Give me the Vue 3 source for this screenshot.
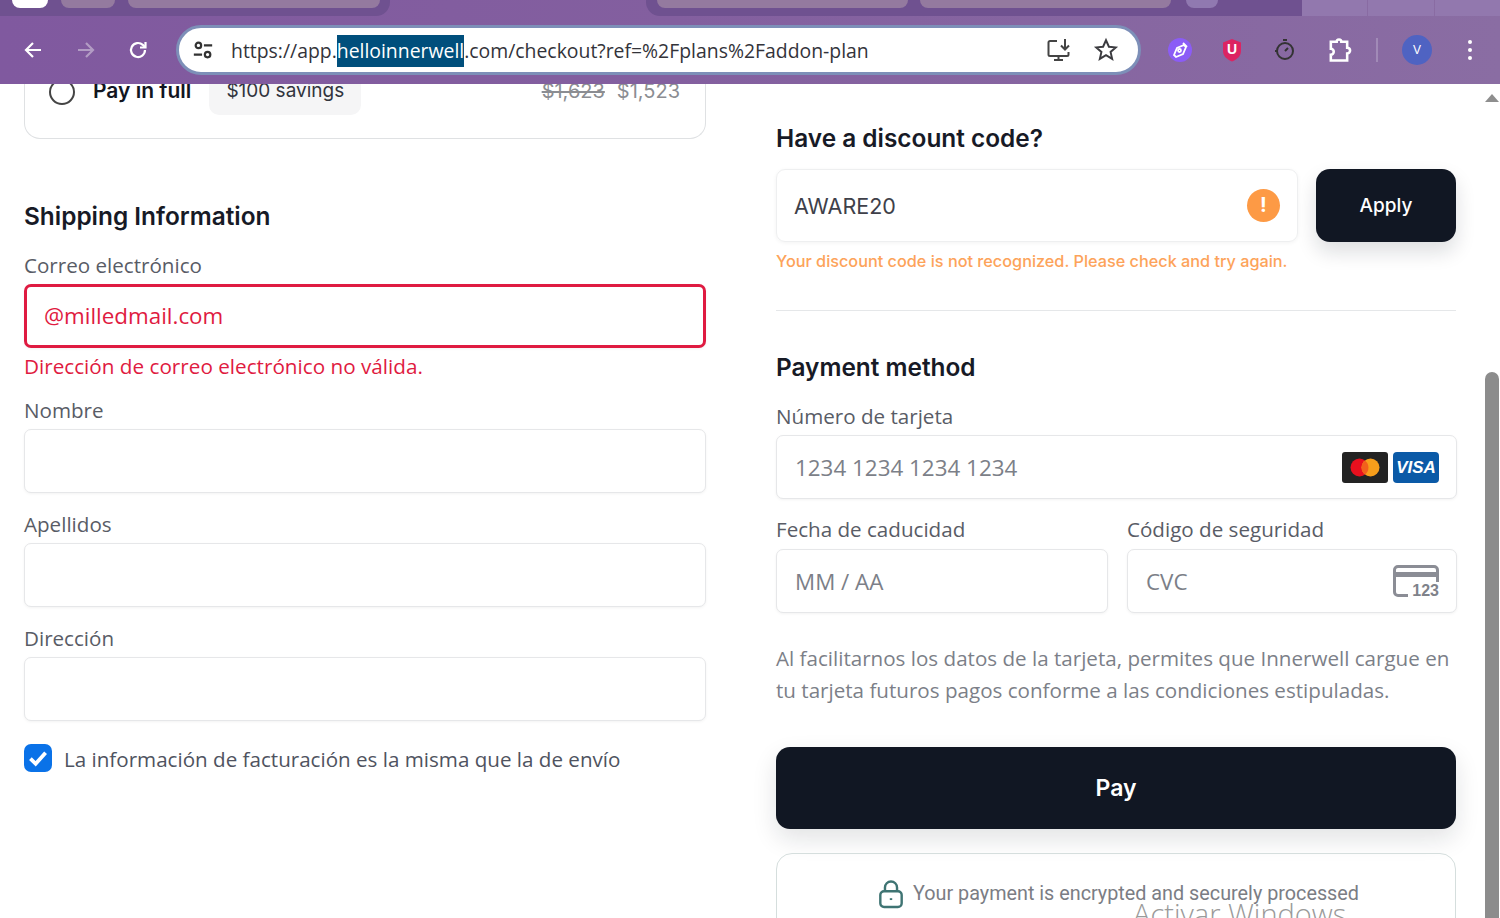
<script setup>
const fields = ["Nombre", "Apellidos", "Dirección"];
</script>

<template>
  <div class="screen">
    <header class="browser">
      <div class="tabstrip">
        <div class="strip-left">
          <span class="tab tab-white"></span>
          <span class="tab tab-small"></span>
          <span class="tab tab-wide"></span>
        </div>
        <div class="strip-right">
          <span class="tab tab-mid"></span>
          <span class="tab tab-mid"></span>
          <span class="tab tab-new"></span>
        </div>
        <div class="window-btns">
          <span></span>
          <span></span>
          <span></span>
        </div>
      </div>
      <div class="toolbar">
        <div class="nav">
          <svg viewBox="0 0 24 24" class="nav-icon">
            <path d="M20 12H5M12 5l-7 7 7 7" />
          </svg>
          <svg viewBox="0 0 24 24" class="nav-icon dim">
            <path d="M4 12h15M12 5l7 7-7 7" />
          </svg>
          <svg viewBox="0 0 24 24" class="nav-icon">
            <path d="M19 12a7 7 0 1 1-2.2-5.1L19 9" />
            <path d="M19.5 4v5.5H14" />
          </svg>
        </div>
        <div class="omnibox">
          <svg viewBox="0 0 24 24" class="tune">
            <circle cx="7" cy="7" r="3" />
            <path d="M13 7h9M2 17h9" />
            <circle cx="17" cy="17" r="3" />
          </svg>
          <div class="url">
            https://app.<span class="selected">helloinnerwell</span>.com/checkout?ref=%2Fplans%2Faddon-plan
          </div>
          <svg viewBox="0 0 28 24" class="install">
            <path d="M11 3H4a1.5 1.5 0 0 0-1.5 1.5v12A1.5 1.5 0 0 0 4 18h17a1.5 1.5 0 0 0 1.5-1.5V14" />
            <path d="M8 22h9M12.5 18v4" />
            <path d="M19 1v10M15 7.5l4 4 4-4" />
          </svg>
          <svg viewBox="0 0 24 24" class="star">
            <path d="M12 3l2.7 6 6.3.6-4.8 4.2 1.5 6.4L12 16.8l-5.7 3.4 1.5-6.4L3 9.6 9.3 9z" />
          </svg>
        </div>
        <div class="extensions">
          <span class="ext-purple">
            <svg viewBox="0 0 24 24">
              <path d="M6 17l3-7 7-3 2 2-3 7-7 3zM15 5l4 4" />
              <circle cx="11.5" cy="12.5" r="1.5" />
            </svg>
          </span>
          <svg viewBox="0 0 24 24" class="ext-shield">
            <path d="M12 1l9 3.5V13c0 5-4 8.5-9 10.5C7 21.5 3 18 3 13V4.5z" />
            <text x="12" y="16" text-anchor="middle">U</text>
          </svg>
          <svg viewBox="0 0 24 24" class="ext-timer">
            <circle cx="12" cy="13" r="8" />
            <path d="M10 2h4M12 13l3-3M2 13h3" />
          </svg>
          <svg viewBox="0 0 24 24" class="ext-puzzle">
            <path d="M5 5h5a2 2 0 0 1 4 0h5v5a2.5 2.5 0 0 1 0 5v6H5v-5a2.5 2.5 0 0 0 0-5z" />
          </svg>
          <span class="ext-sep"></span>
          <span class="avatar">V</span>
          <span class="dots">
            <i></i>
            <i></i>
            <i></i>
          </span>
        </div>
      </div>
    </header>

    <div class="viewport">
      <main class="page">
        <section class="col">
          <div class="plan-card">
            <div class="plan-row">
              <span class="radio"></span>
              <b class="plan-name">Pay in full</b>
              <span class="savings">$100 savings</span>
              <span class="prices"><s>$1,623</s><span>$1,523</span></span>
            </div>
          </div>

          <h2 class="shipping-title">Shipping Information</h2>

          <label class="label">Correo electrónico</label>
          <div class="input input-error">@milledmail.com</div>
          <p class="error-text">Dirección de correo electrónico no válida.</p>

          <template v-for="field in fields" :key="field">
            <label class="label field-label">{{ field }}</label>
            <div class="input"></div>
          </template>

          <div class="billing">
            <span class="checkbox">
              <svg viewBox="0 0 24 24">
                <path d="M5.5 12.5l4.5 4.5 8.5-9.5" />
              </svg>
            </span>
            <span>La información de facturación es la misma que la de envío</span>
          </div>
        </section>

        <section class="col">
          <h2 class="discount-title">Have a discount code?</h2>
          <div class="discount-row">
            <div class="discount-input">
              <span>AWARE20</span>
              <span class="warn">!</span>
            </div>
            <button class="apply">Apply</button>
          </div>
          <p class="discount-msg">Your discount code is not recognized. Please check and try again.</p>
          <hr class="divider" />

          <h2 class="payment-title">Payment method</h2>
          <label class="label card-label">Número de tarjeta</label>
          <div class="input card-input">
            <span class="placeholder">1234 1234 1234 1234</span>
            <span class="brands">
              <svg viewBox="0 0 46 31" class="brand">
                <rect width="46" height="31" rx="3" fill="#232323" />
                <circle cx="17.5" cy="15.5" r="9" fill="#e8101e" />
                <circle cx="28.5" cy="15.5" r="9" fill="#f79e1b" />
                <path d="M23 8.4a9 9 0 0 1 0 14.2 9 9 0 0 1 0-14.2z" fill="#f2601c" />
              </svg>
              <span class="visa">VISA</span>
            </span>
          </div>

          <div class="two-cols">
            <div>
              <label class="label card-label">Fecha de caducidad</label>
              <div class="input card-input">
                <span class="placeholder">MM / AA</span>
              </div>
            </div>
            <div>
              <label class="label card-label">Código de seguridad</label>
              <div class="input card-input">
                <span class="placeholder">CVC</span>
                <span class="cvc-icon">
                  <svg viewBox="0 0 46 32">
                    <path d="M15 30.5H5A3.5 3.5 0 0 1 1.5 27V5A3.5 3.5 0 0 1 5 1.5h36A3.5 3.5 0 0 1 44.5 5v12" />
                    <path d="M1.5 9.5h43" class="cvc-band" />
                  </svg>
                  <b>123</b>
                </span>
              </div>
            </div>
          </div>

          <p class="terms">
            Al facilitarnos los datos de la tarjeta, permites que Innerwell cargue en<br />
            tu tarjeta futuros pagos conforme a las condiciones estipuladas.
          </p>

          <button class="pay">Pay</button>

          <div class="secure">
            <svg viewBox="0 0 28 32" class="lock">
              <rect x="2.5" y="13" width="23" height="17" rx="4" />
              <path d="M7.5 13V9a6.5 6.5 0 0 1 13 0v4" />
              <path d="M14 20.5v2" />
            </svg>
            <span>Your payment is encrypted and securely processed</span>
          </div>
        </section>
      </main>

      <aside class="scrollbar">
        <span class="scroll-up"></span>
        <span class="scroll-thumb"></span>
      </aside>
      <div class="watermark">Activar Windows</div>
    </div>
  </div>
</template>

<style>
html,
body {
  margin: 0;
  background: #fff;
}
</style>

<style scoped>
.screen {
  width: 1500px;
  height: 918px;
  overflow: hidden;
  display: flex;
  flex-direction: column;
  font-family: "Open Sans", "Liberation Sans", sans-serif;
  color: #4f5360;
}

/* browser chrome */
.browser {
  height: 84px;
  flex: none;
  background: linear-gradient(90deg, #80599f 0%, #835f9f 45%, #8a6da3 100%);
}
.tabstrip {
  height: 16px;
  display: flex;
  justify-content: space-between;
  overflow: hidden;
}
.strip-left,
.strip-right {
  height: 16px;
  background: #6f5190;
  display: flex;
  align-items: flex-start;
  flex: none;
}
.strip-left {
  width: 390px;
  padding-left: 12px;
  box-sizing: border-box;
  border-radius: 0 0 14px 0;
}
.strip-right {
  width: 656px;
  margin-left: 256px;
  padding-left: 11px;
  box-sizing: border-box;
  border-radius: 0 0 0 14px;
}
.tab {
  height: 8px;
  border-radius: 0 0 10px 10px;
  background: #947a9f;
  flex: none;
}
.tab-white {
  width: 36px;
  background: #fff;
}
.tab-small {
  width: 54px;
  margin-left: 13px;
}
.tab-wide {
  width: 252px;
  margin-left: 13px;
}
.tab-mid {
  width: 251px;
  margin-right: 12px;
}
.tab-new {
  width: 32px;
  margin-left: 3px;
  border-radius: 0 0 16px 16px;
  background: #9079b0;
}
.window-btns {
  width: 198px;
  display: flex;
  gap: 1px;
  flex: none;
}
.window-btns span {
  flex: 1;
  background: #9278ae;
}
.toolbar {
  height: 68px;
  display: flex;
  align-items: center;
}
.nav {
  width: 176px;
  padding-left: 21px;
  box-sizing: border-box;
  display: flex;
  gap: 28.5px;
  flex: none;
}
.nav-icon {
  width: 24px;
  height: 24px;
  fill: none;
  stroke: #fff;
  stroke-width: 2.2;
}
.nav-icon.dim {
  stroke: #b29cc4;
}
.omnibox {
  width: 965px;
  height: 50px;
  box-sizing: border-box;
  border: 3px solid #7d8fb8;
  border-radius: 25px;
  background: #fff;
  display: flex;
  align-items: center;
  padding: 0 19px 0 13px;
  flex: none;
}
.tune {
  width: 22px;
  height: 22px;
  fill: none;
  stroke: #333;
  stroke-width: 2.4;
  flex: none;
}
.url {
  margin-left: 17px;
  padding-top: 1px;
  flex: 1;
  font-size: 19.4px;
  line-height: 32px;
  color: #33333a;
  white-space: nowrap;
}
.selected {
  display: inline-block;
  background: #004f7c;
  color: #fff;
}
.install {
  width: 28px;
  height: 24px;
  fill: none;
  stroke: #444;
  stroke-width: 2;
  flex: none;
}
.star {
  width: 26px;
  height: 26px;
  margin-left: 19px;
  fill: none;
  stroke: #3c3c40;
  stroke-width: 1.8;
  flex: none;
}
.extensions {
  display: flex;
  align-items: center;
  margin-left: 27px;
}
.ext-purple {
  width: 24px;
  height: 24px;
  border-radius: 50%;
  background: #8b5cf6;
  flex: none;
}
.ext-purple svg {
  width: 24px;
  height: 24px;
  display: block;
  fill: none;
  stroke: #fff;
  stroke-width: 1.8;
}
.ext-shield {
  width: 24px;
  height: 24px;
  margin-left: 28px;
  fill: #dc2462;
  flex: none;
}
.ext-shield text {
  fill: #fff;
  font: bold 14px "Liberation Sans", sans-serif;
}
.ext-timer {
  width: 24px;
  height: 24px;
  margin-left: 29px;
  fill: none;
  stroke: #333;
  stroke-width: 2;
  flex: none;
}
.ext-puzzle {
  width: 28px;
  height: 28px;
  margin-left: 28px;
  fill: none;
  stroke: #fff;
  stroke-width: 2.2;
  flex: none;
}
.ext-sep {
  width: 2px;
  height: 24px;
  margin-left: 23px;
  background: #a18ab7;
  flex: none;
}
.avatar {
  width: 30px;
  height: 30px;
  margin-left: 24px;
  border-radius: 50%;
  background: #4f63c2;
  color: #fff;
  font: 12px/30px "Liberation Sans", sans-serif;
  text-align: center;
  flex: none;
}
.dots {
  display: flex;
  flex-direction: column;
  gap: 4px;
  margin-left: 36px;
}
.dots i {
  width: 4px;
  height: 4px;
  border-radius: 50%;
  background: #fff;
}

/* page */
.viewport {
  flex: 1;
  display: flex;
  position: relative;
  overflow: hidden;
  min-height: 0;
}
.page {
  width: 1457px;
  padding-left: 24px;
  box-sizing: border-box;
  display: grid;
  grid-template-columns: 682px 681px;
  column-gap: 70px;
  align-items: start;
}
.col {
  min-width: 0;
}
.plan-card {
  height: 55px;
  box-sizing: border-box;
  border: 1.5px solid #dfe1e3;
  border-top: 0;
  border-radius: 0 0 16px 16px;
  padding: 0 25px 0 24px;
}
.plan-row {
  display: flex;
  align-items: flex-start;
}
.radio {
  width: 26px;
  height: 26px;
  margin-top: -5px;
  box-sizing: border-box;
  border: 2px solid #444;
  border-radius: 50%;
  flex: none;
}
.plan-name {
  margin-left: 18px;
  margin-top: -7px;
  font: 600 21px/28px "Inter", sans-serif;
  color: #12151f;
}
.savings {
  margin-left: 18px;
  height: 31px;
  padding: 0 17px;
  border-radius: 0 0 10px 10px;
  background: #f5f5f6;
  font: 400 19px/14px "Inter", sans-serif;
  color: #31343d;
}
.prices {
  margin-left: auto;
  display: flex;
  gap: 12px;
  font: 400 20px/14px "Inter", sans-serif;
  color: #8b8d92;
}
.shipping-title,
.discount-title,
.payment-title {
  margin: 0;
  font: 600 24.4px/32px "Inter", sans-serif;
  color: #171a26;
}
.shipping-title {
  margin-top: 61px;
}
.label {
  display: block;
  font-size: 20.6px;
  line-height: 30px;
  color: #595c66;
}
.shipping-title + .label {
  margin-top: 18px;
}
.input {
  height: 64px;
  box-sizing: border-box;
  border: 1.5px solid #e6e7e9;
  border-radius: 7px;
  box-shadow: 0 1px 3px rgba(0, 0, 0, 0.05);
  background: #fff;
}
.input-error {
  margin-top: 4px;
  border: 3px solid #df1b41;
  padding: 0 17px;
  font-size: 22.4px;
  line-height: 58px;
  color: #df1b41;
}
.error-text {
  margin: 2px 0 -3px;
  font-size: 20.7px;
  line-height: 32px;
  color: #df1b41;
}
.field-label {
  margin-top: 16px;
  margin-bottom: 4px;
}
.billing {
  margin-top: 23px;
  display: flex;
  align-items: flex-start;
  gap: 12px;
  font-size: 20.6px;
  line-height: 30px;
  color: #4f5360;
}
.checkbox {
  width: 28px;
  height: 28px;
  border-radius: 7px;
  background: #0a72e8;
  flex: none;
}
.checkbox svg {
  display: block;
  fill: none;
  stroke: #fff;
  stroke-width: 3.2;
}
.discount-title {
  margin-top: 38px;
}
.discount-row {
  margin-top: 15px;
  display: flex;
  gap: 18px;
}
.discount-input {
  width: 522px;
  height: 73px;
  box-sizing: border-box;
  border: 1.5px solid #eeeff0;
  border-radius: 9px;
  box-shadow: 0 1px 4px rgba(0, 0, 0, 0.05);
  padding: 0 17px;
  display: flex;
  align-items: center;
  justify-content: space-between;
  font: 400 21.5px/30px "Inter", sans-serif;
  color: #3e4049;
}
.warn {
  width: 33px;
  height: 33px;
  border-radius: 50%;
  background: #fd9a45;
  color: #fff;
  font: 700 20px/33px "Inter", sans-serif;
  text-align: center;
}
.apply {
  width: 140px;
  height: 73px;
  padding: 1px 0 0;
  border: 0;
  border-radius: 14px;
  background: #111723;
  color: #fff;
  font: 500 19px/30px "Inter", sans-serif;
  box-shadow: 0 10px 20px rgba(17, 23, 35, 0.14);
}
.discount-msg {
  margin: 7px 0 0;
  font: 500 16.25px/24px "Inter", sans-serif;
  color: #fda35a;
  white-space: nowrap;
}
.divider {
  width: 680px;
  margin: 37px 0 0;
  border: 0;
  border-top: 1.5px solid #e5e7e9;
}
.payment-title {
  margin-top: 40px;
}
.card-label {
  margin-top: 18px;
  margin-bottom: 4px;
}
.card-input {
  display: flex;
  align-items: center;
  justify-content: space-between;
  padding: 0 17px 0 18px;
  font-size: 22.4px;
  color: #787b84;
}
.placeholder {
  color: #7c7f88;
}
.brands {
  display: flex;
  gap: 5px;
}
.brand {
  width: 46px;
  height: 31px;
  display: block;
}
.visa {
  width: 46px;
  height: 31px;
  border-radius: 4px;
  background: #0b5aa7;
  color: #fff;
  font: italic 700 17px/31px "Liberation Sans", sans-serif;
  text-align: center;
}
.two-cols {
  display: grid;
  grid-template-columns: 332px 330px;
  column-gap: 19px;
}
.two-cols .card-label {
  margin-top: 15px;
  margin-bottom: 5px;
}
.cvc-icon {
  width: 46px;
  height: 32px;
  position: relative;
  display: block;
}
.cvc-icon svg {
  display: block;
  fill: none;
  stroke: #8b8d95;
  stroke-width: 3;
}
.cvc-band {
  stroke-width: 5;
}
.cvc-icon b {
  position: absolute;
  right: 0;
  bottom: -3px;
  padding-left: 2px;
  background: #fff;
  font: 700 16px/18px "Liberation Sans", sans-serif;
  color: #7f828a;
}
.terms {
  margin: 29px 0 0;
  font-size: 20.6px;
  line-height: 32px;
  color: #7c7f88;
  white-space: nowrap;
}
.pay {
  display: block;
  width: 680px;
  height: 82px;
  margin-top: 41px;
  border: 0;
  border-radius: 14px;
  background: #111723;
  color: #fff;
  font: 600 23px/30px "Inter", sans-serif;
  box-shadow: 0 10px 24px rgba(17, 23, 35, 0.12);
}
.secure {
  width: 680px;
  height: 120px;
  margin-top: 24px;
  box-sizing: border-box;
  border: 1.5px solid #d5dedd;
  border-radius: 16px;
  padding: 24px 0 0 5px;
  display: flex;
  justify-content: center;
  align-items: flex-start;
  gap: 9px;
  font: 400 19.8px/32px "Roboto", sans-serif;
  color: #7b7d84;
}
.lock {
  width: 26px;
  height: 30px;
  margin-top: 1px;
  fill: none;
  stroke: #3f7473;
  stroke-width: 2.6;
  flex: none;
}

.scrollbar {
  margin-left: 27px;
  width: 16px;
  display: flex;
  flex-direction: column;
  align-items: center;
  flex: none;
}
.scroll-up {
  margin-top: 10px;
  border-left: 7px solid transparent;
  border-right: 7px solid transparent;
  border-bottom: 8px solid #8e8e8e;
}
.scroll-thumb {
  margin-top: 270px;
  flex: 1;
  width: 14px;
  border-radius: 7px 7px 0 0;
  background: #8c8c8c;
}
.watermark {
  position: absolute;
  left: 1133px;
  top: 812px;
  font: 300 29px/36px "Open Sans", sans-serif;
  color: #9a9a9a;
  white-space: nowrap;
}
</style>
